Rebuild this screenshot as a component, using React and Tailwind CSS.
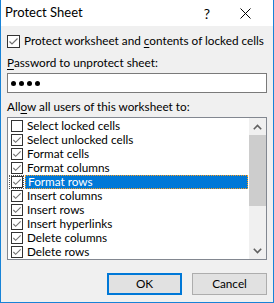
import React from "react";

const items = [
  { label: "Select locked cells", checked: false },
  { label: "Select unlocked cells", checked: true },
  { label: "Format cells", checked: true },
  { label: "Format columns", checked: true },
  { label: "Format rows", checked: true, focused: true },
  { label: "Insert columns", checked: true },
  { label: "Insert rows", checked: true },
  { label: "Insert hyperlinks", checked: true },
  { label: "Delete columns", checked: true },
  { label: "Delete rows", checked: true },
];

function Check({ checked, size = 13 }) {
  return (
    <div
      className="border border-[#333333] bg-white flex items-center justify-center shrink-0"
      style={{ width: size, height: size }}
    >
      {checked && (
        <svg width={size - 2} height={size - 2} viewBox="0 0 11 11">
          <path d="M1.5 5.5 L4 8 L9.5 2.5" fill="none" stroke="#707070" strokeWidth="1.2" />
        </svg>
      )}
    </div>
  );
}

function Chevron({ up }) {
  return (
    <svg width="9" height="6" viewBox="0 0 9 6">
      <path
        d={up ? "M0.8 5.2 L4.5 1.5 L8.2 5.2" : "M0.8 0.8 L4.5 4.5 L8.2 0.8"}
        fill="none"
        stroke="#606060"
        strokeWidth="1.6"
      />
    </svg>
  );
}

export default function App() {
  return (
    <div
      className="w-[274px] h-[303px] bg-[#f0f0f0] border-x border-b border-[#1883d7] flex flex-col text-[11.75px] text-black whitespace-nowrap"
      style={{ fontFamily: '"Lato", "Liberation Sans", sans-serif' }}
    >
      {/* title bar */}
      <div className="h-[26px] bg-white flex items-center shrink-0">
        <span className="pl-[4px] text-[13px]">Protect Sheet</span>
        <span className="ml-auto mr-[30px] text-[14px]">?</span>
        <svg width="11" height="11" viewBox="0 0 11 11" className="mr-[22px]">
          <path d="M0.5 0.5 L10.5 10.5 M10.5 0.5 L0.5 10.5" stroke="#000" strokeWidth="1" />
        </svg>
      </div>

      <div className="flex flex-col px-[6px]">
        <div className="mt-[8px] h-[14px] flex items-center gap-[4px]">
          <Check checked />
          <span className="leading-none">
            Protect worksheet and <u className="underline-offset-2">c</u>ontents of locked cells
          </span>
        </div>

        <div className="mt-[8px] h-[14px] flex items-center leading-none">
          <span>
            <u className="underline-offset-2">P</u>assword to unprotect sheet:
          </span>
        </div>

        <div className="mt-[3px] h-[20px] bg-white border border-[#7a7a7a] flex items-center gap-[2px] pl-[3px]">
          {[0, 1, 2, 3].map((i) => (
            <span key={i} className="w-[5px] h-[5px] rounded-full bg-black mr-[1px]" />
          ))}
        </div>

        <div className="mt-[7px] h-[14px] flex items-center leading-none">
          <span>
            All<u className="underline-offset-2">o</u>w all users of this worksheet to:
          </span>
        </div>

        <div className="mt-[3px] h-[143px] bg-white border border-[#828790] flex">
          <div className="flex-1 flex flex-col pt-[1px]">
            {items.map((it) => (
              <div key={it.label} className="h-[14px] flex items-center">
                <div
                  className={
                    "ml-[1px] h-[14px] w-[15px] flex items-center justify-center " +
                    (it.focused ? "border border-dotted border-[#555]" : "")
                  }
                >
                  <Check checked={it.checked} size={12} />
                </div>
                <span
                  className={
                    "ml-[1px] h-[14px] flex items-center pl-[2px] leading-none " +
                    (it.focused
                      ? "flex-1 mr-[1px] bg-[#0078d7] text-white border border-dotted border-[#ff9d1c]"
                      : "")
                  }
                >
                  {it.label}
                </span>
              </div>
            ))}
          </div>
          <div className="w-[17px] bg-[#f0f0f0] flex flex-col">
            <div className="h-[17px] flex items-center justify-center">
              <Chevron up />
            </div>
            <div className="h-[71px] bg-[#cdcdcd]" />
            <div className="flex-1" />
            <div className="h-[17px] flex items-center justify-center">
              <Chevron />
            </div>
          </div>
        </div>

        <div className="mt-[13px] flex justify-end gap-[10px]">
          <button className="w-[75px] h-[22px] bg-[#e1e1e1] border-2 border-[#0078d7] leading-none">
            OK
          </button>
          <button className="w-[75px] h-[22px] bg-[#e1e1e1] border border-[#adadad] leading-none">
            Cancel
          </button>
        </div>
      </div>
    </div>
  );
}
